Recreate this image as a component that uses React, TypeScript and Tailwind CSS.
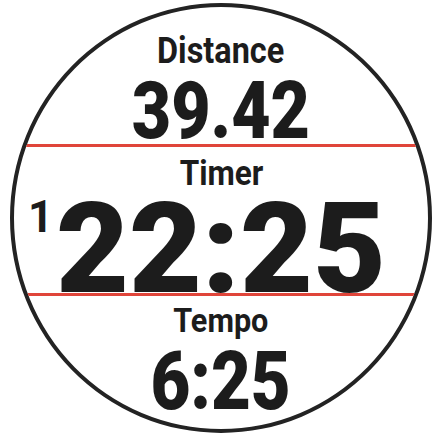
import React from 'react';

const App: React.FC = () => {
  return (
    <div className="w-[440px] h-[437px] bg-white overflow-hidden" style={{ fontFamily: 'Roboto, "Liberation Sans", sans-serif' }}>
      <div className="ml-[10px] mt-[3px] w-[422px] h-[430px] rounded-[50%] border-[4px] border-[#232323] overflow-hidden flex flex-col text-[#1c1c1c]">
        {/* distance */}
        <div className="h-[137px] flex flex-col items-center pt-[26px]">
          <div className="text-[36px] leading-none font-bold scale-x-[0.9]">Distance</div>
          <div className="mt-[2px] text-[80px] leading-none font-black scale-x-[0.85]">39.42</div>
        </div>
        <div className="h-[3px] bg-[#e0453a]" />

        {/* timer */}
        <div className="h-[146px] flex flex-col items-center pt-[9px]">
          <div className="text-[35px] leading-none font-bold scale-x-[0.9]">Timer</div>
          <div className="relative -mt-[5px] text-[126px] leading-none font-black">
            <span className="absolute -left-[28px] top-[9px] text-[44px] leading-none font-bold">1</span>
            22:25
          </div>
        </div>
        <div className="h-[3px] bg-[#e0453a]" />

        {/* tempo */}
        <div className="flex-1 flex flex-col items-center pt-[7px]">
          <div className="text-[34px] leading-none font-bold scale-x-[0.9]">Tempo</div>
          <div className="mt-[4px] text-[81px] leading-none font-black scale-x-[0.85]">6:25</div>
        </div>
      </div>
    </div>
  );
};

export default App;
